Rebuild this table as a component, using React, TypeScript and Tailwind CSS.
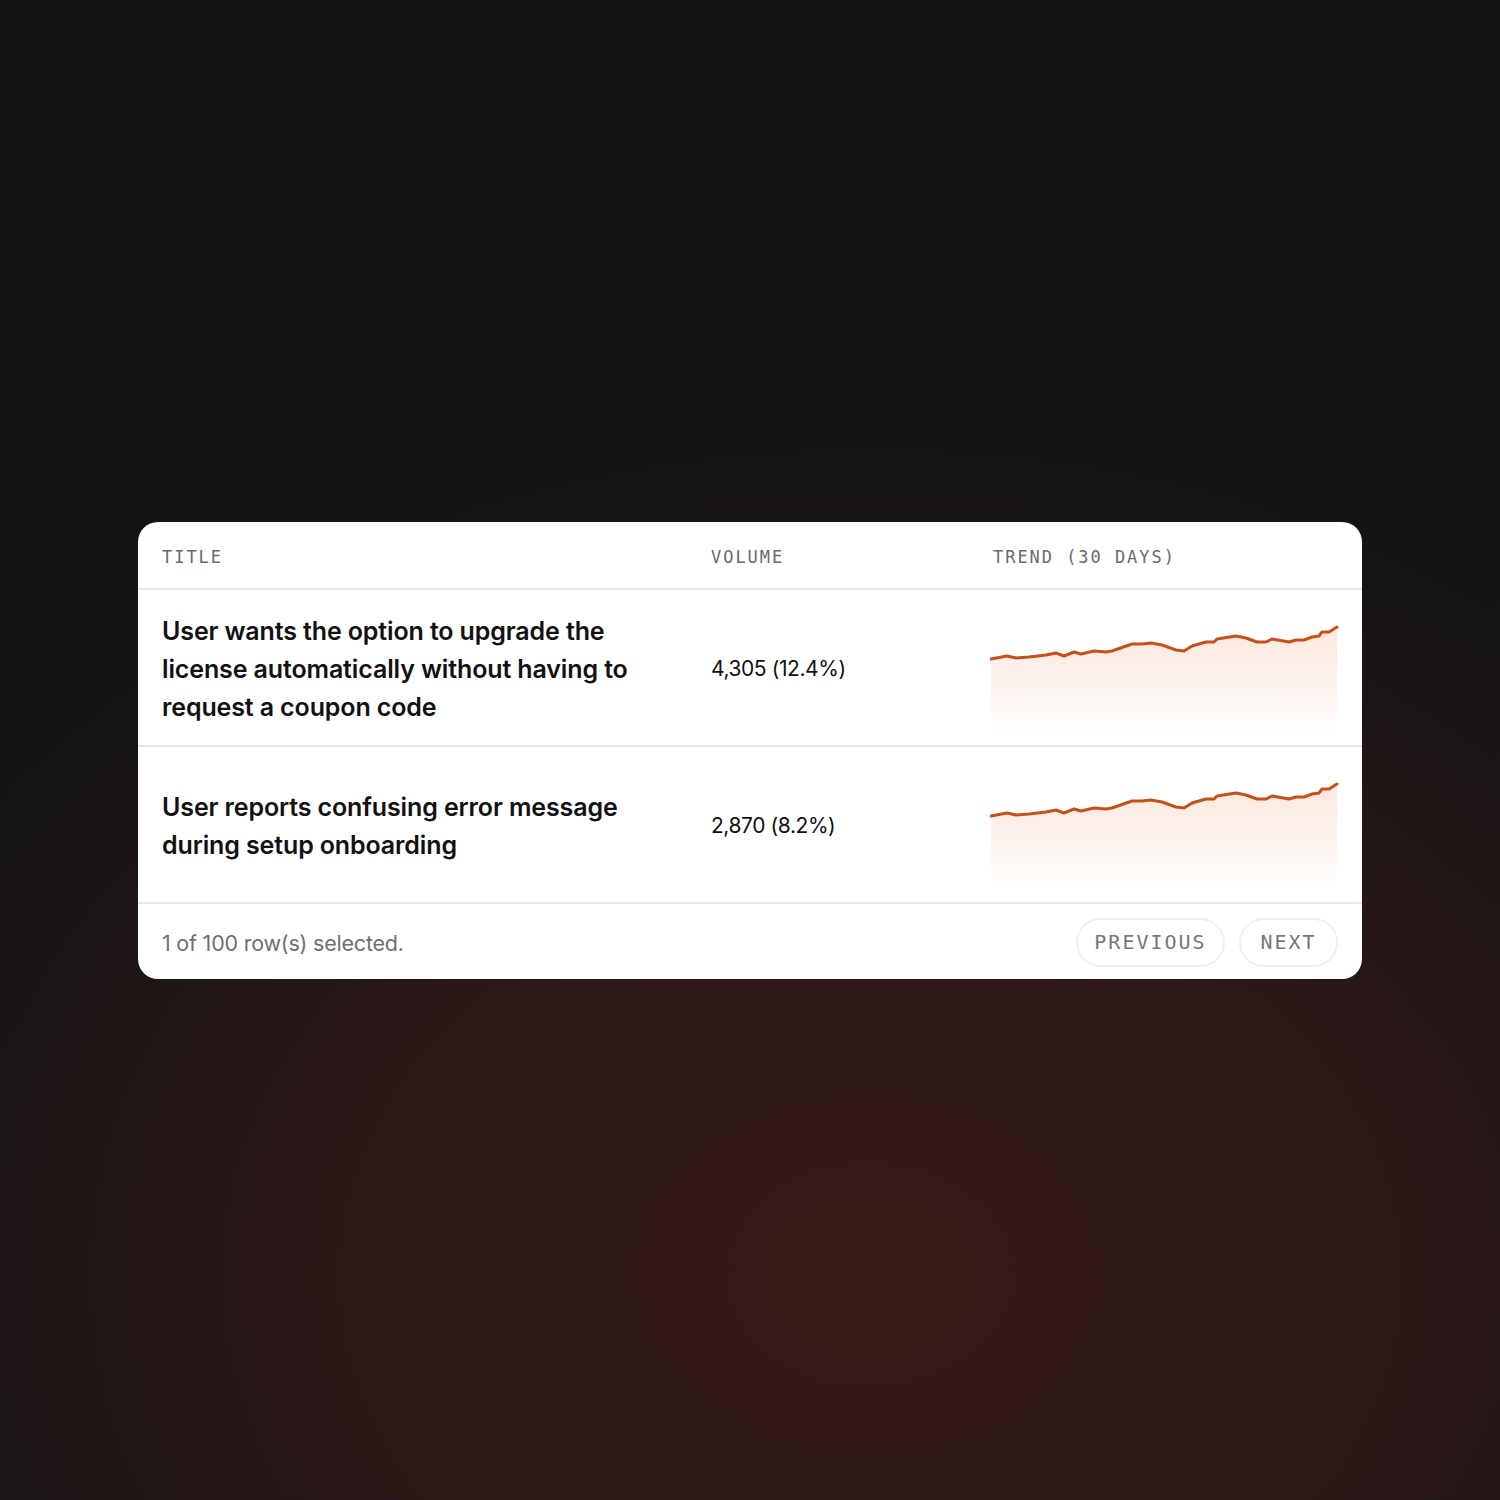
import React from "react";

const pts: [number, number][] = [
  [0, 49], [16, 46], [25, 48], [38, 47], [55, 45], [65, 43], [73, 46], [83, 42], [90, 44],
  [103, 41], [115, 42], [121, 41], [141, 34], [151, 34], [160, 33], [171, 35], [185, 40],
  [193, 41], [201, 36], [215, 32], [223, 32], [226, 29], [245, 26], [255, 28], [266, 32],
  [275, 32], [281, 29], [298, 32], [305, 30], [313, 30], [321, 27], [328, 26], [331, 22],
  [338, 22], [346, 17],
];

function Spark({ id }: { id: string }) {
  const line = pts.map((p, i) => `${i === 0 ? "M" : "L"}${p[0] + 1} ${p[1]}`).join(" ");
  const area = `${line} L347 126 L1 126 Z`;
  return (
    <svg width="350" height="126" viewBox="0 0 350 126" className="block">
      <defs>
        <linearGradient id={id} x1="0" y1="0" x2="0" y2="1">
          <stop offset="0%" stopColor="#e8895a" stopOpacity="0.2" />
          <stop offset="100%" stopColor="#e8895a" stopOpacity="0" />
        </linearGradient>
      </defs>
      <path d={area} fill={`url(#${id})`} />
      <path d={line} fill="none" stroke="#c4511b" strokeWidth="3" strokeLinejoin="round" strokeLinecap="round" />
    </svg>
  );
}

const mono = { fontFamily: '"DejaVu Sans Mono", "Liberation Mono", monospace' };
const sans = { fontFamily: 'Inter, "Noto Sans", sans-serif' };

export default function App() {
  return (
    <div
      className="w-[1500px] h-[1500px] flex items-center justify-center bg-[radial-gradient(ellipse_90%_70%_at_58%_85%,#371a18_0%,#2a1817_40%,#171415_75%,#121215_100%)]"
      style={sans}
    >
      <div className="w-[1224px] bg-white rounded-[20px] overflow-hidden">
        <div className="flex items-center h-[68px] pt-[6px] px-6 gap-6 border-b-2 border-[#e8e8e8] text-[#6a6a6a] text-[17px] tracking-[0.115em]" style={mono}>
          <div className="w-[525px]">TITLE</div>
          <div className="w-[258px]">VOLUME</div>
          <div className="flex-1">TREND (30 DAYS)</div>
        </div>
        <div className="flex items-center h-[157px] pl-6 pr-[22px] gap-6 border-b-2 border-[#e8e8e8]">
          <div className="w-[525px] pt-[3px] text-[25px] leading-[38px] font-semibold text-[#111] tracking-[-0.005em]">
            User wants the option to upgrade the license automatically without having to request a coupon code
          </div>
          <div className="w-[258px] text-[21px] text-[#111] tracking-[-0.02em] pl-[2px] pt-[3px]">4,305 (12.4%)</div>
          <div className="flex-1 mt-[12px]"><Spark id="g1" /></div>
        </div>
        <div className="flex items-center h-[157px] pl-6 pr-[22px] gap-6 border-b-2 border-[#e8e8e8]">
          <div className="w-[525px] pt-[3px] text-[25px] leading-[38px] font-semibold text-[#111] tracking-[-0.005em]">
            User reports confusing error message during setup onboarding
          </div>
          <div className="w-[258px] text-[21px] text-[#111] tracking-[-0.02em] pl-[2px] pt-[3px]">2,870 (8.2%)</div>
          <div className="flex-1 mt-[12px]"><Spark id="g2" /></div>
        </div>
        <div className="flex items-center justify-between h-[75px] pt-[2px] px-6">
          <div className="text-[21.5px] text-[#6f6f6f] tracking-[-0.01em] pt-[2px]">1 of 100 row(s) selected.</div>
          <div className="flex gap-[14px]" style={mono}>
            <button className="h-[49px] w-[149px] rounded-full border-2 border-[#efefef] text-[#777] text-[20px] tracking-[0.1em]">PREVIOUS</button>
            <button className="h-[49px] w-[99px] rounded-full border-2 border-[#efefef] text-[#777] text-[20px] tracking-[0.1em]">NEXT</button>
          </div>
        </div>
      </div>
    </div>
  );
}
